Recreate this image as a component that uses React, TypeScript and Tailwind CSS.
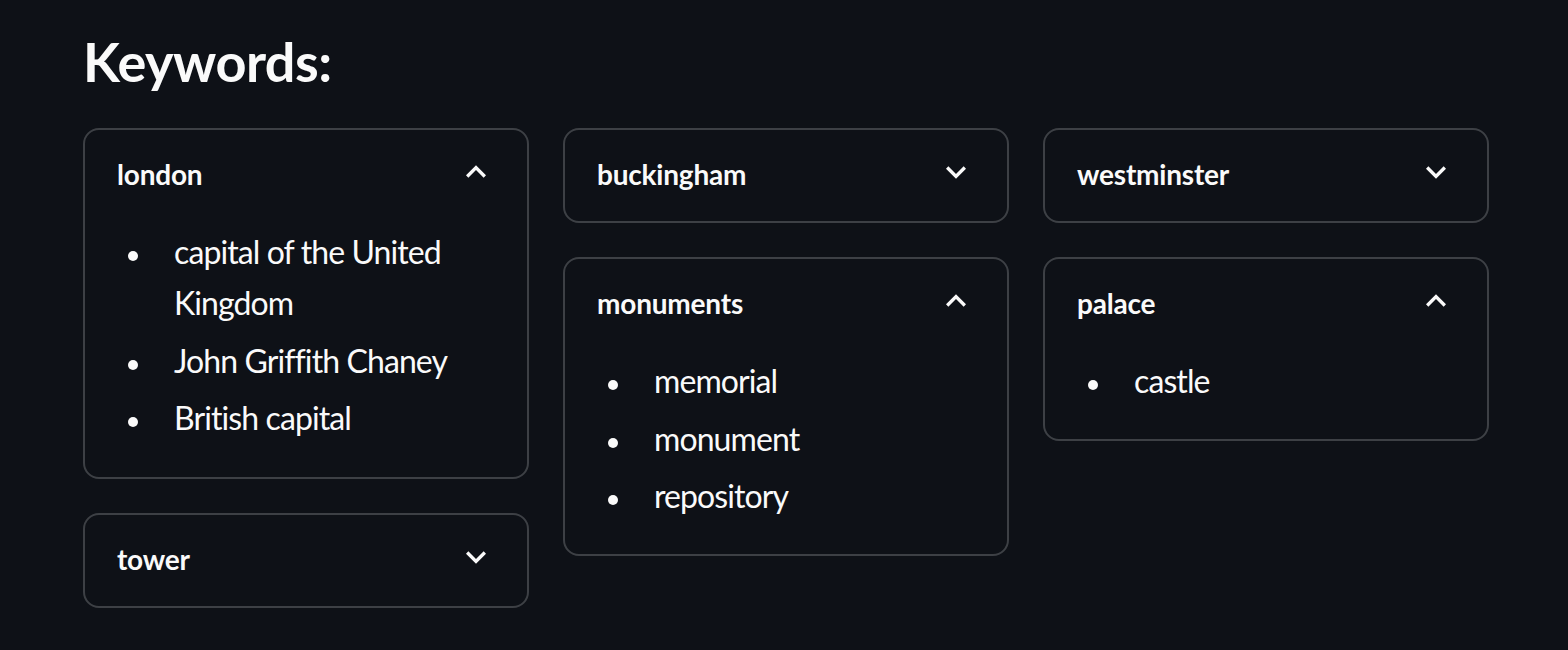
import React from "react";

type Card = { title: string; open: boolean; items?: string[] };

const columns: Card[][] = [
  [
    {
      title: "london",
      open: true,
      items: ["capital of the United Kingdom", "John Griffith Chaney", "British capital"],
    },
    { title: "tower", open: false },
  ],
  [
    { title: "buckingham", open: false },
    { title: "monuments", open: true, items: ["memorial", "monument", "repository"] },
  ],
  [
    { title: "westminster", open: false },
    { title: "palace", open: true, items: ["castle"] },
  ],
];

function Chevron({ up }: { up: boolean }) {
  return (
    <svg viewBox="0 0 24 24" className="w-[40px] h-[40px] shrink-0" fill="#fafafa">
      {up ? (
        <path d="M7.41 15.41 12 10.83l4.59 4.58L18 14l-6-6-6 6z" />
      ) : (
        <path d="M16.59 8.59 12 13.17 7.41 8.59 6 10l6 6 6-6z" />
      )}
    </svg>
  );
}

function Expander({ card }: { card: Card }) {
  return (
    <div className="border-2 border-[#3d4045] rounded-[16px]">
      <div className="flex items-start justify-between h-[91px] pl-[32px] pr-[31px]">
        <span className="mt-[30px] text-[28px] leading-[28px] font-bold tracking-[-0.2px] text-[#fafafa]">
          {card.title}
        </span>
        <div className="mt-[22px]">
          <Chevron up={card.open} />
        </div>
      </div>
      {card.open && card.items && (
        <ul className="flex flex-col gap-[6.4px] pt-[5px] pb-[33px] pl-[43px] pr-[32px]">
          {card.items.map((it) => (
            <li key={it} className="flex items-start">
              <span className="mt-[25px] w-[10px] h-[10px] rounded-full bg-[#fafafa] shrink-0" />
              <span className="ml-[36px] text-[32px] leading-[51.2px] tracking-[-0.9px] text-[#fafafa]">{it}</span>
            </li>
          ))}
        </ul>
      )}
    </div>
  );
}

export default function App() {
  return (
    <div
      className="w-[1568px] h-[650px] bg-[#0e1117] text-[#fafafa] overflow-hidden"
      style={{ fontFamily: "Lato, 'Noto Sans', sans-serif" }}
    >
      <div className="pl-[83px] pt-[35px]">
        <h2 className="text-[54px] leading-[54px] font-bold tracking-[-0.5px] text-[#fafafa]">Keywords:</h2>
        <div className="flex gap-[34px] mt-[39px] w-[1406px]">
          {columns.map((col, i) => (
            <div key={i} className="flex flex-col gap-[34px] w-[446px]">
              {col.map((c) => (
                <Expander key={c.title} card={c} />
              ))}
            </div>
          ))}
        </div>
      </div>
    </div>
  );
}
